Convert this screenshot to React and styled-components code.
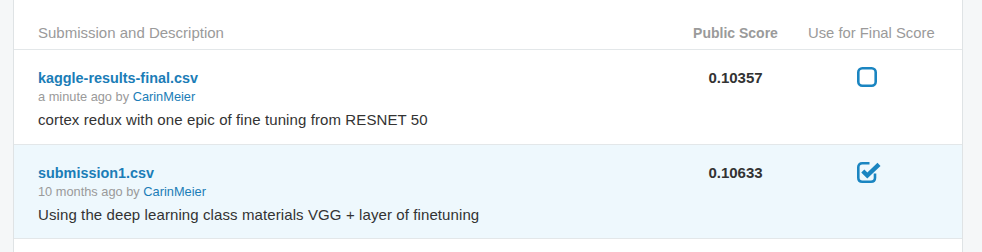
import React from "react";
import styled, { createGlobalStyle } from "styled-components";

const GlobalStyle = createGlobalStyle`
  html, body { margin: 0; padding: 0; }
  body {
    background: #f5f7f8;
    font-family: "Liberation Sans", Arial, sans-serif;
    -webkit-font-smoothing: antialiased;
  }
`;

const Page = styled.div`
  display: flex;
  height: 252px;
  overflow: hidden;
`;

const Panel = styled.div`
  margin-left: 13px;
  width: 950px;
  box-sizing: border-box;
  background: #ffffff;
  border-left: 1px solid #dfe3e5;
  border-right: 1px solid #dfe3e5;
`;

const GridRow = styled.div`
  display: grid;
  grid-template-columns: 1fr 85px 126px;
  column-gap: 30px;
  padding: 0 28px 0 24px;
  border-bottom: 1px solid #e3e7e9;
  background: ${(p) => (p.$selected ? "#eef8fd" : "transparent")};
`;

const HeaderRow = styled(GridRow)`
  padding-top: 24px;
  padding-bottom: 7px;
  height: 50px;
  box-sizing: border-box;
`;

const HeaderCell = styled.div`
  font-size: ${(p) => p.$size || "15px"};
  line-height: 18px;
  color: #9a9a9a;
  font-weight: ${(p) => (p.$bold ? 700 : 400)};
  text-align: ${(p) => p.$align || "left"};
  white-space: nowrap;
`;

const BodyRow = styled(GridRow)`
  height: ${(p) => (p.$last ? "94px" : "95px")};
  box-sizing: border-box;
  padding-top: 19px;
`;

const Description = styled.div`
  display: flex;
  flex-direction: column;
`;

const FileName = styled.a`
  font-size: 14.4px;
  line-height: 18px;
  font-weight: 700;
  color: #1b7db7;
  text-decoration: none;
`;

const Meta = styled.div`
  margin-top: 1px;
  font-size: 12.8px;
  line-height: 18px;
  color: #9a9a9a;
`;

const Author = styled.a`
  color: #1b7db7;
  text-decoration: none;
`;

const Text = styled.div`
  margin-top: 5px;
  font-size: 15px;
  letter-spacing: 0.1px;
  line-height: 18px;
  color: #333333;
`;

const Score = styled.div`
  font-size: 15px;
  line-height: 18px;
  font-weight: 700;
  color: #333333;
  text-align: center;
`;

const CheckCell = styled.div`
  display: flex;
  justify-content: flex-start;
  align-items: flex-start;
  padding-left: 49px;
  margin-top: -2px;
`;

const Unchecked = () => (
  <svg width="20" height="20" viewBox="0 0 20 20">
    <rect x="1.3" y="1.3" width="17.4" height="17.4" rx="4" fill="none" stroke="#1a85c1" strokeWidth="2.6" />
  </svg>
);

const Checked = () => (
  <svg width="25" height="21" viewBox="0 0 25 21">
    <path
      d="M12.5 1.3 H5.3 Q1.3 1.3 1.3 5.3 V15.7 Q1.3 19.7 5.3 19.7 H14 Q18 19.7 18 15.7 V11.5"
      fill="none"
      stroke="#1a85c1"
      strokeWidth="2.6"
    />
    <path d="M5.8 9 L10.3 13.5 L22 2.3" fill="none" stroke="#1a85c1" strokeWidth="4.4" strokeLinejoin="miter" />
  </svg>
);

const submissions = [
  {
    file: "kaggle-results-final.csv",
    when: "a minute ago",
    author: "CarinMeier",
    desc: "cortex redux with one epic of fine tuning from RESNET 50",
    score: "0.10357",
    selected: false,
  },
  {
    file: "submission1.csv",
    when: "10 months ago",
    author: "CarinMeier",
    desc: "Using the deep learning class materials VGG + layer of finetuning",
    score: "0.10633",
    selected: true,
  },
];

export default function App() {
  return (
    <>
      <GlobalStyle />
      <Page>
        <Panel>
          <HeaderRow>
            <HeaderCell>Submission and Description</HeaderCell>
            <HeaderCell $bold $size="14px" $align="center">Public Score</HeaderCell>
            <HeaderCell $size="14.8px" $align="right">Use for Final Score</HeaderCell>
          </HeaderRow>
          {submissions.map((s, i) => (
            <BodyRow key={s.file} $selected={s.selected} $last={i === submissions.length - 1}>
              <Description>
                <FileName href="#">{s.file}</FileName>
                <Meta>
                  {s.when} by <Author href="#">{s.author}</Author>
                </Meta>
                <Text>{s.desc}</Text>
              </Description>
              <Score>{s.score}</Score>
              <CheckCell>{s.selected ? <Checked /> : <Unchecked />}</CheckCell>
            </BodyRow>
          ))}
        </Panel>
      </Page>
    </>
  );
}
